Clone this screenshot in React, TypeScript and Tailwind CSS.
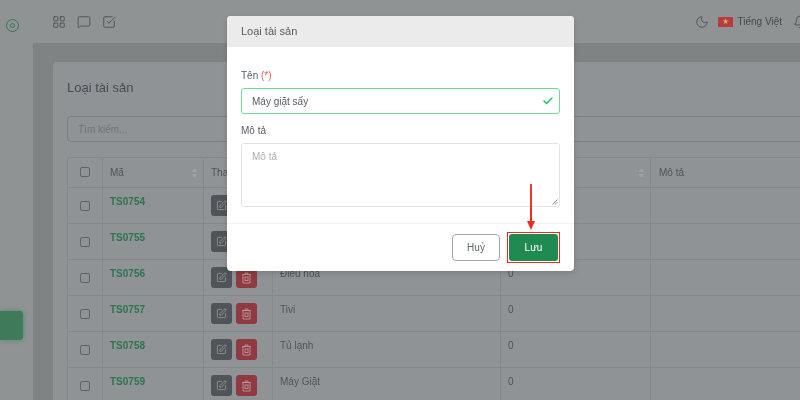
import React from 'react';
import { Bell, Check, LayoutGrid, MessageSquare, Moon, SquareCheckBig, SquarePen } from 'lucide-react';

const rows = [
  { code: 'TS0754', name: 'Máy giặt' },
  { code: 'TS0755', name: 'Máy lạnh' },
  { code: 'TS0756', name: 'Điều hoà' },
  { code: 'TS0757', name: 'Tivi' },
  { code: 'TS0758', name: 'Tủ lạnh' },
  { code: 'TS0759', name: 'Máy Giặt' },
];

const SortIcon = () => (
  <svg width="7" height="10" viewBox="0 0 7 10" className="text-[#a0a3a6]" fill="currentColor">
    <path d="M3.5 0.5 L6.5 4 H0.5 Z" />
    <path d="M3.5 9.5 L0.5 6 H6.5 Z" />
  </svg>
);

const TrashIcon = () => (
  <svg width="11" height="12" viewBox="0 0 11 12" fill="none" stroke="currentColor" strokeWidth="1">
    <path d="M1 2.5 H10 M4 2.5 V1 H7 V2.5 M2 2.5 V11 H9 V2.5" />
    <rect x="4" y="5" width="3" height="3.5" />
  </svg>
);

const Box = () => <div className="w-[10px] h-[10px] rounded-[2px] border border-[#5f6367]" />;

const App = () => {
  return (
    <div className="relative w-[800px] h-[400px] overflow-hidden bg-[#8f9394] text-[#4f5459] font-['Liberation_Sans',Arial,sans-serif]">
      <div className="flex w-[800px] h-[400px] blur-[0.5px]">
        <aside className="w-[33px] shrink-0 relative">
          <div className="mt-[19px] ml-[6px] w-[13px] h-[13px] rounded-full border-[1.5px] border-[#2f7a55] flex items-center justify-center">
            <div className="w-[5px] h-[5px] rounded-full border-[1.5px] border-[#2f7a55]" />
          </div>
          <div className="absolute left-0 top-[311px] w-[23px] h-[29px] rounded-r-[3px] bg-[#3f7a5a] shadow-[0_0_5px_rgba(50,130,90,0.6)]" />
        </aside>

        <main className="flex-1 min-w-0 flex flex-col">
          <header className="h-[43px] shrink-0 flex items-center pl-[19px] w-[774px] text-[#45494f]">
            <div className="flex items-center gap-[11px]">
              <LayoutGrid size={14} strokeWidth={1.4} />
              <MessageSquare size={14} strokeWidth={1.4} />
              <SquareCheckBig size={14} strokeWidth={1.4} />
            </div>
            <div className="ml-auto flex items-center">
              <Moon size={14} strokeWidth={1.4} />
              <div className="ml-[9px] w-[15px] h-[10px] bg-[#b83a42] flex items-center justify-center text-[8px] leading-none text-[#d8b040]">★</div>
              <span className="ml-[5px] text-[10px]">Tiếng Việt</span>
              <div className="relative ml-[11px] shrink-0">
                <Bell size={14} strokeWidth={1.4} />
                <div className="absolute right-0 -top-[2px] w-[7px] h-[7px] rounded-full bg-[#a83a42]" />
              </div>
            </div>
          </header>

          <div className="flex-1 min-h-0 bg-[#7f8384] pl-[20px] pt-[19px]">
            <div className="w-[860px] h-[400px] bg-[#8f9395] rounded-t-[4px] pl-[14px] pt-[17px]">
              <h2 className="text-[13px] leading-[18px] text-[#474b55]">Loại tài sản</h2>
              <div className="mt-[19px] h-[26px] rounded-[4px] border border-[#7b7f81] pl-[10px] flex items-center text-[10px] text-[#6f7376]">
                Tìm kiếm...
              </div>
              <table className="mt-[15px] table-fixed border-collapse w-[846px] text-[10px]">
                <colgroup>
                  <col className="w-[35px]" />
                  <col className="w-[101px]" />
                  <col className="w-[69px]" />
                  <col className="w-[228px]" />
                  <col className="w-[150px]" />
                  <col />
                </colgroup>
                <thead>
                  <tr className="h-[30px]">
                    <th className="border border-[#85898b] font-normal">
                      <div className="flex justify-center -mt-[2px]"><Box /></div>
                    </th>
                    <th className="border border-[#85898b] font-normal text-left pl-[7px] pr-[5px]">
                      <div className="flex items-center justify-between">Mã <SortIcon /></div>
                    </th>
                    <th className="border border-[#85898b] font-normal text-left pl-[7px]">Thao tác</th>
                    <th className="border border-[#85898b] font-normal text-left pl-[7px]">Tên</th>
                    <th className="border border-[#85898b] font-normal text-left pl-[7px] pr-[5px]">
                      <div className="flex items-center justify-between">Số lượng <SortIcon /></div>
                    </th>
                    <th className="border border-[#85898b] font-normal text-left pl-[8px]">Mô tả</th>
                  </tr>
                </thead>
                <tbody>
                  {rows.map(row => (
                    <tr key={row.code} className="h-[36px]">
                      <td className="border border-[#85898b]">
                        <div className="flex justify-center"><Box /></div>
                      </td>
                      <td className="border border-[#85898b] align-top pl-[7px] pt-[8px] text-[#2f7350] font-bold leading-[12px]">{row.code}</td>
                      <td className="border border-[#85898b] pl-[7px]">
                        <div className="flex gap-[4px]">
                          <div className="w-[21px] h-[21px] rounded-[3px] bg-[#505458] flex items-center justify-center text-[#a3a6a9]">
                            <SquarePen size={11} strokeWidth={1.5} />
                          </div>
                          <div className="w-[21px] h-[21px] rounded-[3px] bg-[#8f3a42] flex items-center justify-center text-[#b98d92]">
                            <TrashIcon />
                          </div>
                        </div>
                      </td>
                      <td className="border border-[#85898b] align-top pl-[7px] pt-[8px] leading-[12px]">{row.name}</td>
                      <td className="border border-[#85898b] align-top pl-[7px] pt-[8px] leading-[12px]">0</td>
                      <td className="border border-[#85898b]" />
                    </tr>
                  ))}
                </tbody>
              </table>
            </div>
          </div>
        </main>
      </div>

      <div className="absolute left-[227px] top-[16px] w-[347px] h-[255px] bg-white rounded-[4px] overflow-hidden flex flex-col shadow-[0_2px_6px_rgba(0,0,0,0.15)] blur-[0.3px]">
        <div className="h-[31px] shrink-0 bg-[#ebebeb] pl-[14px] flex items-center text-[11px] text-[#565b66]">Loại tài sản</div>
        <div className="px-[14px] pt-[23px] h-[177px] shrink-0 border-b border-[#f3f3f3]">
          <label className="block text-[10px] leading-[12px] text-[#565b66]">Tên <span className="text-[#f0565c]">(*)</span></label>
          <div className="mt-[6px] w-[319px] h-[26px] rounded-[3px] border border-[#6fdc9a] pl-[10px] pr-[5px] flex items-center justify-between text-[10px] text-[#565b66]">
            Máy giặt sấy
            <Check size={12} strokeWidth={3} className="text-[#22c55e]" />
          </div>
          <label className="block mt-[11px] text-[10px] leading-[12px] text-[#565b66]">Mô tả</label>
          <div className="relative mt-[6px] w-[319px] h-[64px] rounded-[3px] border border-[#e2e3e5] pl-[10px] pt-[7px] text-[10px] leading-[12px] text-[#adb0b5]">
            Mô tả
            <svg width="6" height="6" viewBox="0 0 6 6" className="absolute right-[1px] bottom-[1px] text-[#8a8d92]" stroke="currentColor" fill="none">
              <path d="M0.5 5.5 L5.5 0.5 M3 5.5 L5.5 3" />
            </svg>
          </div>
        </div>
        <div className="flex-1 flex items-start justify-end gap-[7px] pt-[10px] pr-[16px]">
          <button className="w-[48px] h-[27px] rounded-[4px] border border-[#a4a7ab] text-[10px] text-[#62666e] bg-white">Huỷ</button>
          <div className="p-[1px] border border-[#f02a1d] -mt-[2px] -mr-[2px]">
            <button className="block w-[49px] h-[27px] rounded-[3px] bg-[#208a52] text-[10px] text-white">Lưu</button>
          </div>
        </div>
      </div>

      <svg className="absolute left-[526px] top-[184px]" width="10" height="46" viewBox="0 0 10 46" fill="#f02a1d">
        <path d="M4.1 0 H5.9 L6 37 H4 Z" />
        <path d="M1 37 H9 L5 46 Z" />
      </svg>
    </div>
  );
};

export default App;
